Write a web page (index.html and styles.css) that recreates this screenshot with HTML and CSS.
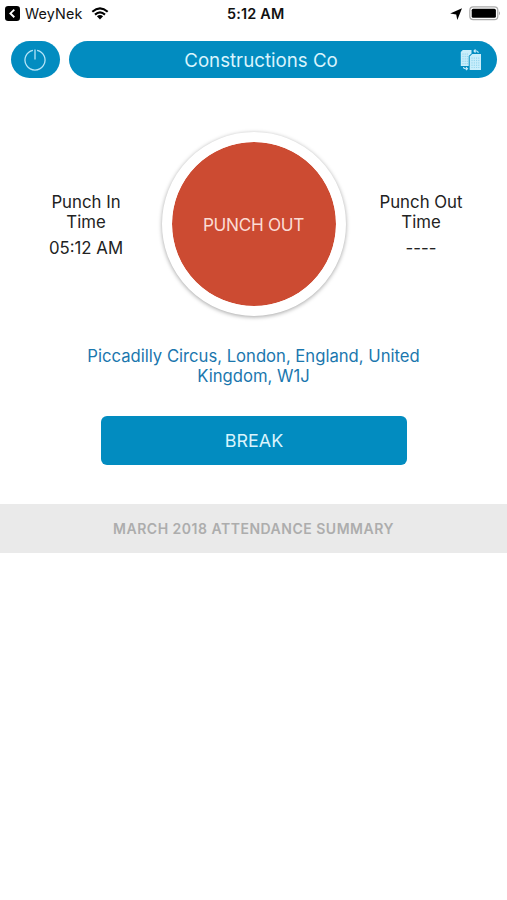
FILE: index.html
```html
<!DOCTYPE html>
<html lang="en">
<head>
<meta charset="utf-8">
<title>Attendance</title>
<link rel="stylesheet" href="styles.css">
</head>
<body>
<div class="status">
  <div class="status-left">
    <svg width="15" height="15" viewBox="0 0 15 15"><rect width="15" height="15" rx="3.2"/><path d="M9.3 3.6 5.4 7.4 9.3 11.2" fill="none" stroke="#fff" stroke-width="1.9"/></svg>
    <span class="carrier">WeyNek</span>
    <svg class="wifi" width="18" height="13" viewBox="0 0 18 13"><g fill="none" stroke="#000" stroke-width="2.1"><path d="M1.3 4.7Q9-2 16.7 4.7"/><path d="M4 7.6Q9 3.1 14 7.6"/></g><path d="M5.9 9.2Q9 6.8 12.1 9.2L9 12.4Z"/></svg>
  </div>
  <span class="clock">5:12 AM</span>
  <div class="status-right">
    <svg width="12" height="12" viewBox="0 0 12 12"><path d="M12 .2 7.3 12 6.2 6.4.2 5.5Z"/></svg>
    <svg width="32" height="15" viewBox="0 0 32 15"><rect x=".8" y=".8" width="28" height="12.8" rx="3.4" fill="#fff" stroke="#aaa" stroke-width="1.2"/><rect x="2.7" y="2.7" width="24.2" height="9" rx="1.5"/><path d="M30 5.2q2 2 0 4z" fill="#aaa"/></svg>
  </div>
</div>
<header class="header">
  <button class="power" aria-label="Power"><svg width="22" height="22" viewBox="0 0 22 22" fill="none" stroke="#b5e4f7" stroke-width="1.3"><path d="M8.9 1.3A10 10 0 1 0 13.1 1.3M11 .5V10.5"/></svg></button>
  <div class="title">
    <span class="company">Constructions Co</span>
    <svg class="swap" width="22" height="22" viewBox="0 0 22 22"><g fill="#c9eefb"><path d="M.8 3 2.8 1H11.5V4.5L8.7 7V17H.8Z"/><path d="M9.7 7.5 12.2 5H21V21H9.7Z"/></g><g fill="none" stroke="#7fcbe8" stroke-width=".8" stroke-dasharray="1.2 1.2"><path d="M3 4.5v11M5.2 4.5v11M7.3 4.5v11M12 8.5v10.5M14.3 8.5v10.5M16.6 8.5v10.5M18.8 8.5v10.5"/></g><g fill="none" stroke="#c9eefb" stroke-width="1.1"><path d="M14 2h2.6q1.6 0 1.6 2M15.5 .5 14 2 15.5 3.5M3.5 18q0 1.7 2 1.7H7.5M6 18.2 7.5 19.7 6 21.2"/></g></svg>
  </div>
</header>
<main>
  <section class="punch">
    <div class="time"><span>Punch In</span><span>Time</span><span class="value">05:12 AM</span></div>
    <button class="circle"><span>PUNCH OUT</span></button>
    <div class="time"><span>Punch Out</span><span>Time</span><span class="value">----</span></div>
  </section>
  <p class="place">Piccadilly Circus, London, England, United<br>Kingdom, W1J</p>
  <button class="break">BREAK</button>
  <h2 class="summary">MARCH 2018 ATTENDANCE SUMMARY</h2>
</main>
</body>
</html>
```

FILE: styles.css
```css
* { box-sizing: border-box; }
body {
  margin: 0;
  min-height: 900px;
  background: #fff;
  color: #222;
  font-family: Inter, "Liberation Sans", sans-serif;
}
button { border: 0; padding: 0; font-family: inherit; }
svg { display: block; flex: none; }
.status {
  display: grid;
  grid-template-columns: 222px 1fr 216px;
  align-items: center;
  height: 27px;
  padding: 0 6px 0 5px;
  color: #111;
}
.status-left, .status-right { display: flex; align-items: center; }
.status-left { gap: 5px; }
.status-right { justify-content: flex-end; gap: 7px; }
.carrier { font-size: 14.3px; letter-spacing: 0.15px; }
.wifi { margin-left: 4px; }
.clock {
  font-size: 14.4px;
  font-weight: 600;
  letter-spacing: 0.2px;
  white-space: nowrap;
}
.header {
  display: flex;
  gap: 9px;
  height: 51px;
  padding: 14px 10px 0 11px;
}
.power, .title {
  height: 37px;
  background: #028cc0;
  border-radius: 19px;
  display: flex;
  align-items: center;
  justify-content: center;
}
.power { width: 49px; padding-right: 1px; }
.title {
  flex: 1;
  padding-right: 15px;
  color: #d9f4fd;
}
.company {
  flex: 1;
  padding: 2px 7px 0 0;
  font-size: 18.7px;
  text-align: center;
  white-space: nowrap;
}
.punch {
  display: grid;
  grid-template-columns: 99px 184px 99px;
  justify-content: center;
  column-gap: 26px;
  height: 238px;
  padding-top: 54.4px;
}
.time {
  display: flex;
  flex-direction: column;
  align-items: center;
  padding-top: 59.6px;
  font-size: 16.8px;
  line-height: 20.5px;
  white-space: nowrap;
}
.value { margin-top: 5px; }
.circle {
  width: 184px;
  height: 184px;
  border: 10px solid #fff;
  border-radius: 50%;
  background: #cc4b32;
  background-clip: padding-box;
  box-shadow: 0 1px 4px rgba(0, 0, 0, .36);
  color: #fbdcd5;
  font-size: 17.2px;
  letter-spacing: -0.3px;
}
.place {
  margin: 30px 0 0;
  text-align: center;
  color: #1b77ae;
  font-size: 16.65px;
  line-height: 20px;
}
.break {
  display: block;
  width: 306px;
  height: 49px;
  margin: 30px auto 0 101px;
  border-radius: 6px;
  background: #028cc0;
  color: #d9f4fd;
  font-size: 17.9px;
}
.summary {
  margin: 39px 0 0;
  height: 49px;
  line-height: 49px;
  text-align: center;
  background: #eaeaea;
  color: #adadad;
  font-size: 14px;
  font-weight: 600;
  letter-spacing: 0.5px;
}
```
